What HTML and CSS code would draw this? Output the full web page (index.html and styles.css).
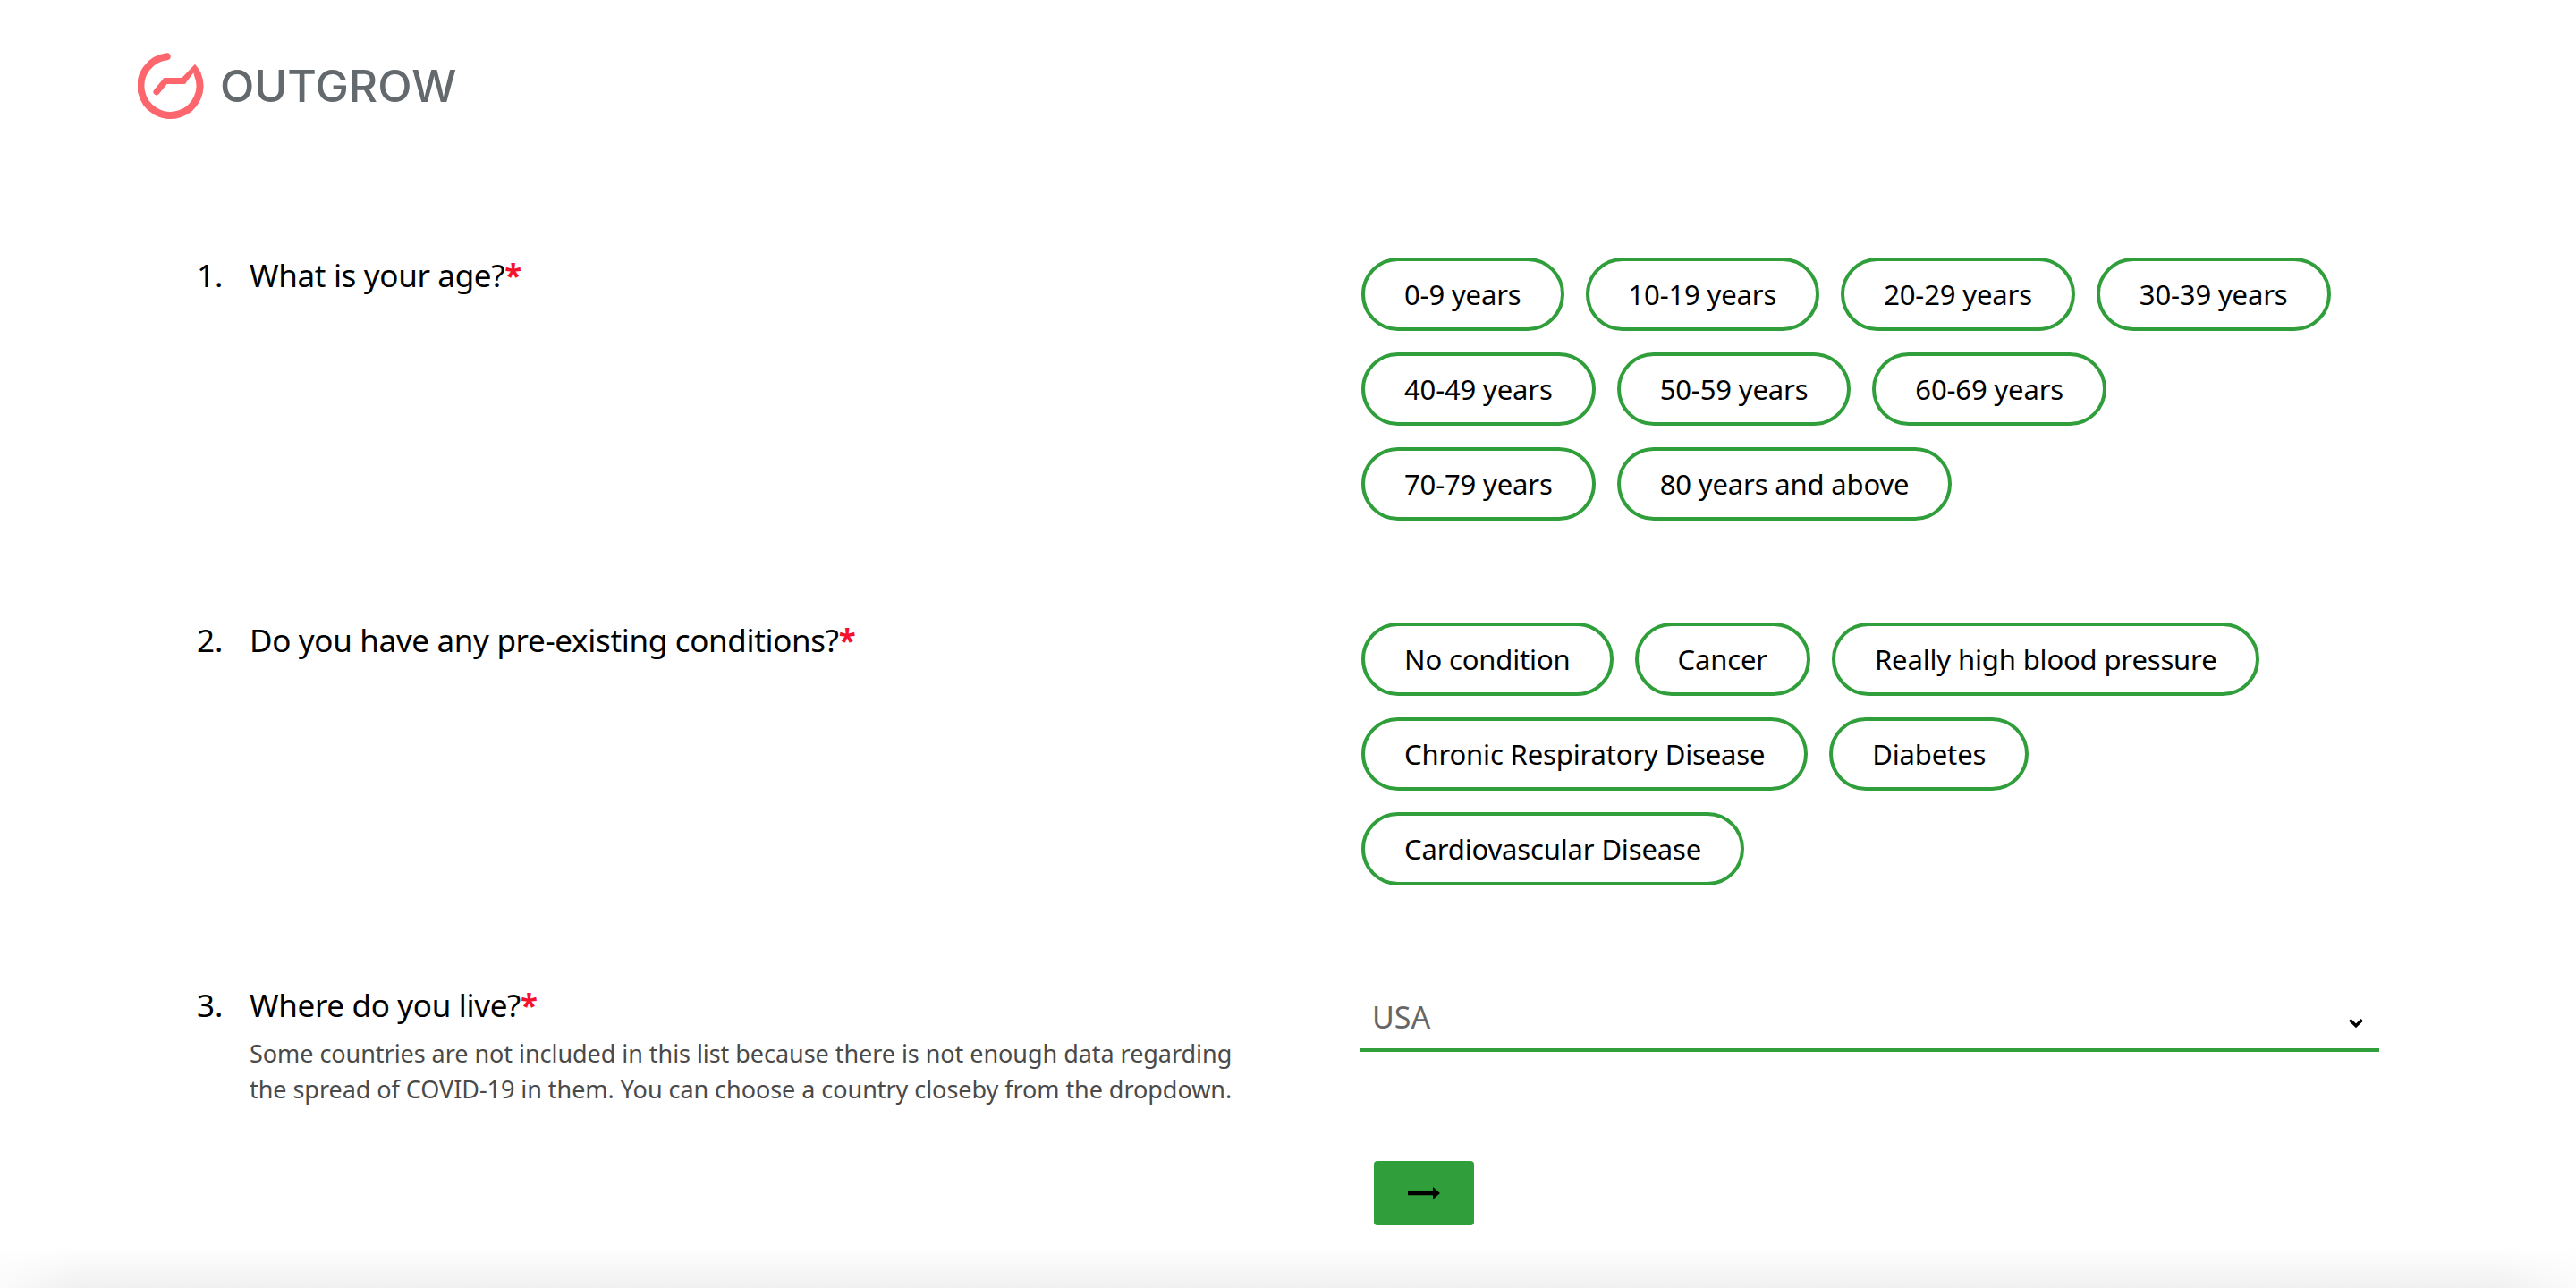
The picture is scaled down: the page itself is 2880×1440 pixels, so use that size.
FILE: index.html
```html
<!DOCTYPE html>
<html lang="en">
<head>
    <meta charset="UTF-8">
    <title>Outgrow</title>
    <link rel="stylesheet" href="styles.css">
</head>
<body>
    <header class="brand">
        <svg class="brand-mark" width="74" height="76" viewBox="0 0 74 76">
            <path class="ring" d="M32.700 5.200A33 33 0 1 0 66.800 25" />
            <path class="zigzag" d="M21 44.700L31 32.500H51" />
            <path class="tip" d="M64 13.700L49.300 29L52.700 36L62 23.700L70.700 24A37 37 0 0 0 64 13.700Z" />
        </svg>
        <span class="brand-name">OUTGROW</span>
    </header>

    <main class="quiz">
        <section class="question">
            <div class="prompt">
                <span class="num">1.</span>
                <div class="prompt-text">
                    <h2>What is your age?<span class="req">*</span></h2>
                </div>
            </div>
            <div class="pills">
                <button class="pill">0-9 years</button>
                <button class="pill">10-19 years</button>
                <button class="pill">20-29 years</button>
                <button class="pill">30-39 years</button>
                <button class="pill">40-49 years</button>
                <button class="pill">50-59 years</button>
                <button class="pill">60-69 years</button>
                <button class="pill">70-79 years</button>
                <button class="pill">80 years and above</button>
            </div>
        </section>

        <section class="question">
            <div class="prompt">
                <span class="num">2.</span>
                <div class="prompt-text">
                    <h2>Do you have any pre-existing conditions?<span class="req">*</span></h2>
                </div>
            </div>
            <div class="pills">
                <button class="pill">No condition</button>
                <button class="pill">Cancer</button>
                <button class="pill">Really high blood pressure</button>
                <button class="pill">Chronic Respiratory Disease</button>
                <button class="pill">Diabetes</button>
                <button class="pill">Cardiovascular Disease</button>
            </div>
        </section>

        <section class="question">
            <div class="prompt">
                <span class="num">3.</span>
                <div class="prompt-text">
                    <h2>Where do you live?<span class="req">*</span></h2>
                    <p>Some countries are not included in this list because there is not enough data regarding the spread of COVID-19 in them. You can choose a country closeby from the dropdown.</p>
                </div>
            </div>
            <div class="select-wrap">
                <select class="country">
                    <option>USA</option>
                    <option>India</option>
                    <option>Italy</option>
                </select>
                <svg class="chevron" width="16" height="10" viewBox="0 0 16 10">
                    <path d="M1.200 1.200L8 7.800L14.800 1.200" />
                </svg>
            </div>
        </section>

        <div class="actions">
            <button class="next" aria-label="Next">
                <svg width="36" height="14" viewBox="0 0 36 14">
                    <path d="M0 4.800H28V0L36 7L28 14V9.200H0Z" />
                </svg>
            </button>
        </div>
    </main>

    <div class="page-fade"></div>
</body>
</html>
```

FILE: styles.css
```css
body {
    margin: 0;
    height: 1440px;
    overflow: hidden;
    position: relative;
    background: #fff;
    color: #000;
    font-family: "Noto Sans", sans-serif;
}
.brand {
    display: flex;
    align-items: center;
    gap: 18px;
    height: 76px;
    padding: 58px 0 0 154px;
}
.brand-mark .ring {
    fill: none;
    stroke: #fd666d;
    stroke-width: 8;
    stroke-linecap: round;
}
.brand-mark .zigzag {
    fill: none;
    stroke: #fd666d;
    stroke-width: 7;
    stroke-linecap: round;
}
.brand-mark .tip {
    fill: #fd666d;
}
.brand-name {
    font-family: "Inter", sans-serif;
    font-size: 50px;
    font-weight: 500;
    color: #63696c;
}
.quiz {
    padding: 154px 0 0 220px;
}
.question {
    display: grid;
    grid-template-columns: 1302px 1140px;
}
.question + .question {
    margin-top: 114px;
}
.prompt {
    display: flex;
}
.num {
    width: 59px;
    flex: none;
    font-size: 35px;
    line-height: 40px;
}
.prompt-text h2 {
    margin: 0;
    font-size: 35px;
    font-weight: 400;
    letter-spacing: -0.330px;
    line-height: 40px;
}
.prompt-text p {
    margin: 14px 0 0;
    width: 1110px;
    font-size: 27px;
    letter-spacing: -0.050px;
    line-height: 40px;
    color: #4a4a4a;
}
.req {
    color: #f5122c;
    font-weight: 700;
}
.pills {
    display: flex;
    flex-wrap: wrap;
    gap: 24px;
    max-width: 1100px;
}
.pill {
    height: 82px;
    padding: 0 44px;
    border: 4px solid #2f9e3b;
    border-radius: 41px;
    background: #fff;
    color: #000;
    font-family: inherit;
    font-size: 31px;
    letter-spacing: -0.150px;
}
.select-wrap {
    position: relative;
    margin: 0 2px 0 -2px;
}
.country {
    display: block;
    width: 100%;
    height: 72px;
    padding: 0 14px 2px;
    border: 0;
    border-bottom: 4px solid #2f9e3b;
    border-radius: 0;
    background: #fff;
    color: #666;
    font-family: inherit;
    font-size: 34px;
    appearance: none;
}
.chevron {
    position: absolute;
    top: 35px;
    right: 18px;
    fill: none;
    stroke: #000;
    stroke-width: 3.400;
}
.actions {
    padding: 60px 0 0 1316px;
}
.next {
    display: flex;
    align-items: center;
    justify-content: center;
    width: 112px;
    height: 72px;
    padding: 0;
    border: 0;
    border-radius: 4px;
    background: #2f9e3b;
}
.page-fade {
    position: absolute;
    left: 0;
    right: 0;
    bottom: 0;
    height: 46px;
    background: linear-gradient(to bottom, rgba(240, 240, 240, 0), #f0f0f0);
    -webkit-mask-image: linear-gradient(to right, rgba(0, 0, 0, 0.3), #000 90px, #000 calc(100% - 90px), rgba(0, 0, 0, 0.3));
    mask-image: linear-gradient(to right, rgba(0, 0, 0, 0.3), #000 90px, #000 calc(100% - 90px), rgba(0, 0, 0, 0.3));
}
```
